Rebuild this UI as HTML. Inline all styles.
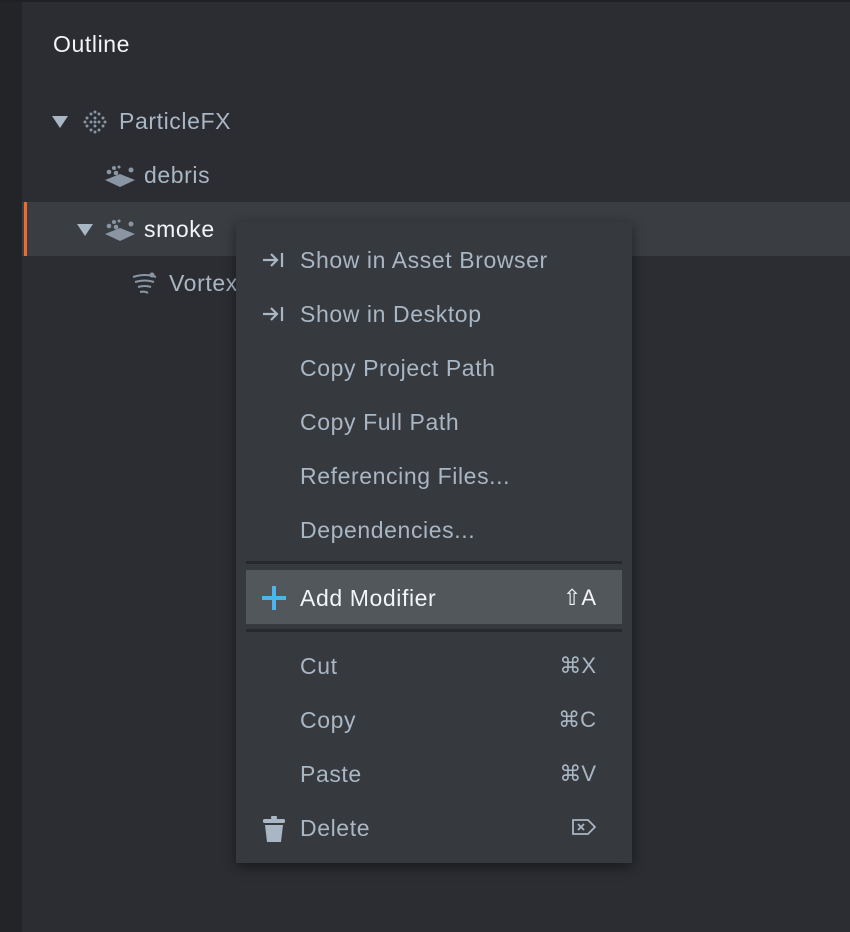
<!DOCTYPE html>
<html><head><meta charset="utf-8"><style>
*{margin:0;padding:0;box-sizing:border-box}
body{width:850px;height:932px;background:#2b2d32;position:relative;overflow:hidden;font-family:"Liberation Sans",sans-serif;}
.strip{position:absolute;left:0;top:0;width:22px;height:932px;background:#222428}
.topl{position:absolute;left:0;top:0;width:850px;height:2px;background:#1f2124}
.title{position:absolute;left:53px;top:31px;font-size:23px;letter-spacing:0.6px;color:#f2f4f6}
.row{position:absolute;font-size:23px;letter-spacing:0.6px;color:#a9b6c4}
.sel{position:absolute;left:22px;top:202px;width:828px;height:54px;background:#3a3d42}
.selbar{position:absolute;left:24px;top:202px;width:3px;height:54px;background:#f06a2a}
.tri{position:absolute;width:0;height:0;border-left:8px solid transparent;border-right:8px solid transparent;border-top:12px solid #a9b6c4}
.menu{position:absolute;left:236px;top:222px;width:396px;height:641px;background:#36393e;box-shadow:0 4px 12px rgba(0,0,0,.45)}
.mi{position:absolute;left:64px;font-size:23px;letter-spacing:0.6px;color:#a9b6c4;line-height:56px;height:54px}
.sc{position:absolute;right:36px;font-size:22px;color:#a9b6c4;line-height:56px}
.sep{position:absolute;left:10px;width:376px;height:3px;background:#27292d}
.hl{position:absolute;left:10px;top:348px;width:376px;height:54px;background:#52575c}
.arr{position:absolute;left:26px}
</style></head><body>
<div class="strip"></div><div class="topl"></div>
<div class="title">Outline</div>
<div class="sel"></div><div class="selbar"></div>
<div class="tri" style="left:52px;top:116px"></div>
<svg style="position:absolute;left:82px;top:109px" width="26" height="26" viewBox="0 0 26 26" fill="#8a96a3">
<g><circle cx="13" cy="3" r="1.5"/><circle cx="9" cy="5" r="1.5"/><circle cx="17" cy="5" r="1.5"/><circle cx="5" cy="9" r="1.5"/><circle cx="13" cy="9" r="1.5"/><circle cx="21" cy="9" r="1.5"/><circle cx="9" cy="13" r="1.5"/><circle cx="17" cy="13" r="1.5"/><circle cx="3" cy="13" r="1.5"/><circle cx="23" cy="13" r="1.5"/><circle cx="13" cy="13" r="1.5"/><circle cx="5" cy="17" r="1.5"/><circle cx="13" cy="17" r="1.5"/><circle cx="21" cy="17" r="1.5"/><circle cx="9" cy="21" r="1.5"/><circle cx="17" cy="21" r="1.5"/><circle cx="13" cy="23" r="1.5"/></g></svg>
<div class="row" style="left:119px;top:108px">ParticleFX</div>
<svg style="position:absolute;left:104px;top:164px" width="32" height="26" viewBox="0 0 32 26" fill="#8a96a3"><circle cx="10" cy="4" r="2"/><circle cx="15" cy="3" r="1.5"/><circle cx="5" cy="8" r="2.3"/><circle cx="12" cy="9" r="2.3"/><circle cx="27" cy="6" r="2.5"/><path d="M1 16 L16 10 L31 16 L16 23 Z"/></svg>
<div class="row" style="left:144px;top:162px">debris</div>
<div class="tri" style="left:77px;top:224px"></div>
<svg style="position:absolute;left:104px;top:218px" width="32" height="26" viewBox="0 0 32 26" fill="#8a96a3"><circle cx="10" cy="4" r="2"/><circle cx="15" cy="3" r="1.5"/><circle cx="5" cy="8" r="2.3"/><circle cx="12" cy="9" r="2.3"/><circle cx="27" cy="6" r="2.5"/><path d="M1 16 L16 10 L31 16 L16 23 Z"/></svg>
<div class="row" style="left:144px;top:216px;color:#f2f4f6">smoke</div>
<svg style="position:absolute;left:130px;top:271px" width="30" height="28" viewBox="0 0 30 28" fill="none" stroke="#8a96a3" stroke-width="2"><path d="M3 6 Q15 2 26 6 M5 11 Q15 8 24 11 M8 16 Q15 14 21 16 M10 21 Q15 20 18 22"/><circle cx="22" cy="4" r="2.5" fill="#8a96a3" stroke="none"/></svg>
<div class="row" style="left:169px;top:270px">Vortex</div>
<div class="menu">
<svg class="arr" style="top:30px" width="22" height="16" viewBox="0 0 22 16" fill="none" stroke="#a9b6c4" stroke-width="2.2"><path d="M1 8H15M9 2L15 8L9 14M20 1V15"/></svg>
<div class="mi" style="top:10px">Show in Asset Browser</div>
<svg class="arr" style="top:84px" width="22" height="16" viewBox="0 0 22 16" fill="none" stroke="#a9b6c4" stroke-width="2.2"><path d="M1 8H15M9 2L15 8L9 14M20 1V15"/></svg>
<div class="mi" style="top:64px">Show in Desktop</div>
<div class="mi" style="top:118px">Copy Project Path</div>
<div class="mi" style="top:172px">Copy Full Path</div>
<div class="mi" style="top:226px">Referencing Files...</div>
<div class="mi" style="top:280px">Dependencies...</div>
<div class="sep" style="top:339px"></div>
<div class="hl"></div>
<svg style="position:absolute;left:25px;top:363px" width="26" height="26" viewBox="0 0 26 26"><path d="M13 1V25M1 13H25" stroke="#4fb3ee" stroke-width="4"/></svg>
<div class="mi" style="top:348px;color:#f2f4f6">Add Modifier</div><div class="sc" style="top:348px;color:#f2f4f6">⇧A</div>
<div class="sep" style="top:407px"></div>
<div class="mi" style="top:416px">Cut</div><div class="sc" style="top:416px">⌘X</div>
<div class="mi" style="top:470px">Copy</div><div class="sc" style="top:470px">⌘C</div>
<div class="mi" style="top:524px">Paste</div><div class="sc" style="top:524px">⌘V</div>
<svg style="position:absolute;left:27px;top:594px" width="22" height="26" viewBox="0 0 22 26" fill="#a9b6c4"><rect x="8" y="0" width="6" height="3" rx="1"/><rect x="0" y="3" width="22" height="4" rx="1.5"/><path d="M2 9H20L18 26H4Z"/></svg>
<div class="mi" style="top:578px">Delete</div>
<svg style="position:absolute;right:36px;top:597px" width="24" height="16" viewBox="0 0 24 16" fill="none" stroke="#a9b6c4" stroke-width="1.8"><path d="M1 1H16L23 8L16 15H1Z"/><path d="M6 5L12 11M12 5L6 11"/></svg>
</div>
</body></html>
